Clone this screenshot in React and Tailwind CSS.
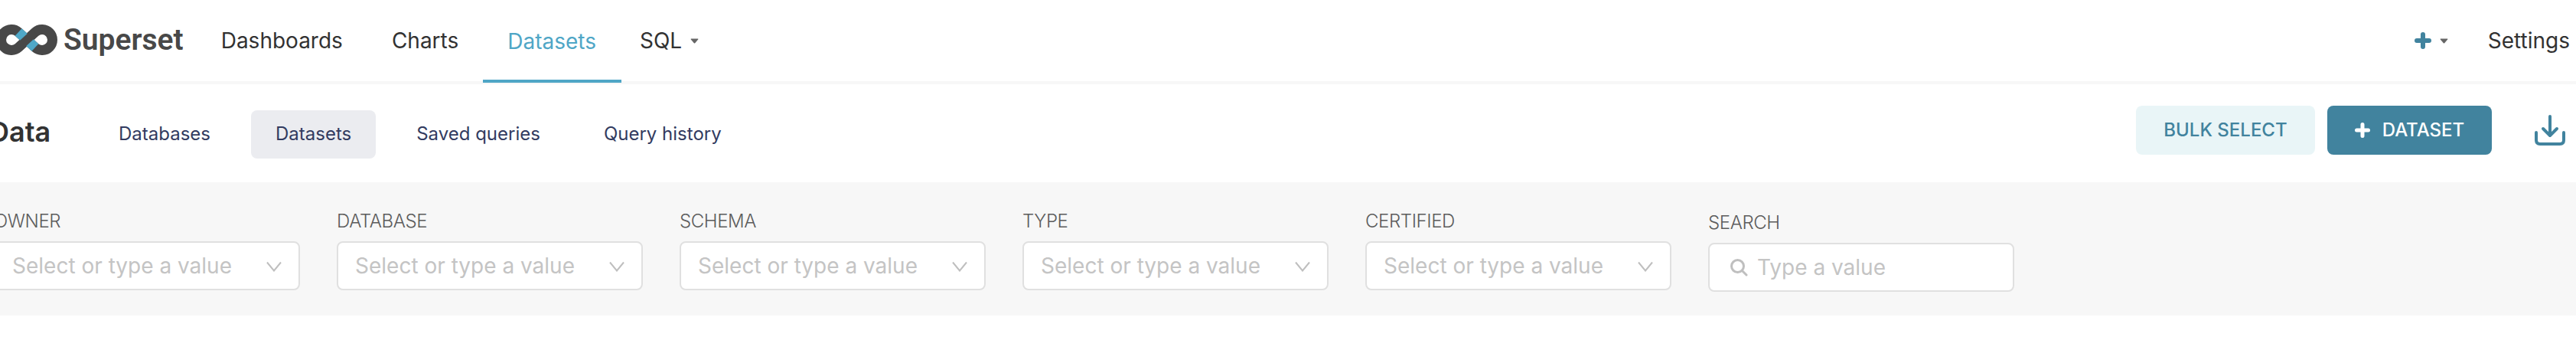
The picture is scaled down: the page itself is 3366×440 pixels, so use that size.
import React from "react";

const font = { fontFamily: '"Inter", "Liberation Sans", sans-serif' };

function Logo() {
  return (
    <svg width="75" height="40" viewBox="0 29 75 40" fill="none" className="shrink-0">
      <path d="M24.1 59 L45.9 39 A13.5 13.5 0 1 1 45.9 59 L24.1 39 A13.5 13.5 0 1 0 24.1 59 Z" stroke="#484848" strokeWidth="13" />
      <path d="M24.1 39 L45.9 59" stroke="#4fa8c8" strokeWidth="13" />
      <path d="M24.1 59 L45.9 39" stroke="#484848" strokeWidth="11" />
    </svg>
  );
}

function Caret({ className }) {
  return (
    <svg width="11" height="7" viewBox="0 0 11 7" className={className}>
      <path d="M1.2 0.5 H9.8 Q10.8 0.5 10.2 1.5 L6.2 6.2 Q5.5 6.9 4.8 6.2 L0.8 1.5 Q0.2 0.5 1.2 0.5 Z" fill="#666666" />
    </svg>
  );
}

function Chevron() {
  return (
    <svg width="20" height="14" viewBox="0 0 20 14" fill="none" className="shrink-0">
      <path d="M1 1.5 L10 12.5 L19 1.5" stroke="#bfbfbf" strokeWidth="2" />
    </svg>
  );
}

function SelectFilter({ label }) {
  return (
    <div className="flex w-[400px] shrink-0 flex-col">
      <div className="h-[26px] text-[24px] font-light leading-[26px] tracking-[-0.4px] text-[#5c5c5c]">{label}</div>
      <div className="mt-[13px] flex h-[64px] items-center justify-between rounded-[8px] border-2 border-[#e0e0e0] bg-white pl-[22px] pr-[22px]">
        <span className="text-[28px] font-normal leading-[36px] text-[#c4c4c4]">Select or type a value</span>
        <span className="mt-[2px] flex"><Chevron /></span>
      </div>
    </div>
  );
}

export default function App() {
  return (
    <div style={font} className="h-[440px] w-[3366px] overflow-hidden bg-white">
      <header className="flex h-[110px] items-start border-b-4 border-[#f7f7f7]">
        <div className="flex h-[106px] items-center pb-[2px]">
          <Logo />
          <span style={{ fontFamily: 'Roboto, "Liberation Sans", sans-serif' }} className="ml-[8px] text-[39px] font-semibold leading-[44px] text-[#484848]">Superset</span>
        </div>
        <nav className="ml-[17px] flex text-[28px] text-[#323232]">
          <a className="flex h-[106px] items-center px-[32px]">Dashboards</a>
          <a className="flex h-[106px] items-center px-[32px]">Charts</a>
          <a className="flex h-[108px] items-center border-b-4 border-[#4fa6c6] pl-[32px] pr-[33px] pt-[4px] text-[#4fa6c6]">Datasets</a>
          <a className="ml-[24px] flex h-[106px] items-center gap-[11px]">SQL<Caret /></a>
        </nav>
        <div className="ml-auto flex h-[106px] items-center">
          <svg width="22" height="22" viewBox="0 0 22 22" className="shrink-0">
            <path d="M11 3 V19 M3 11 H19" stroke="#41839e" strokeWidth="6" strokeLinecap="round" />
          </svg>
          <span className="ml-[11px] flex"><Caret /></span>
          <span className="ml-[52px] text-[28px] text-[#323232]">Settings</span>
          <span className="w-[8px]" />
        </div>
      </header>

      <section className="flex h-[128px] items-center">
        <div className="mb-[4px] ml-[-14px] w-[136px] text-[36px] font-semibold leading-[44px] text-[#323232]">Data</div>
        <div className="mt-[2px] flex items-center text-[24px] text-[#323b60]">
          <a className="flex h-[63px] items-center rounded-[8px] px-[33px]">Databases</a>
          <a className="ml-[20px] flex h-[63px] items-center rounded-[8px] bg-[#ebecf0] px-[32px]">Datasets</a>
          <a className="ml-[20px] flex h-[63px] items-center rounded-[8px] px-[33px]">Saved queries</a>
          <a className="ml-[17px] flex h-[63px] items-center rounded-[8px] px-[33px]">Query history</a>
        </div>
        <div className="mb-[8px] ml-auto flex items-center">
          <button className="flex h-[64px] w-[234px] items-center justify-center rounded-[8px] bg-[#e9f5f7] text-[24px] font-medium text-[#41839e]">BULK SELECT</button>
          <button className="ml-[16px] flex h-[64px] w-[215px] items-center justify-center gap-[16px] rounded-[8px] bg-[#41839e] text-[24px] font-medium text-white">
            <svg width="20" height="20" viewBox="0 0 20 20" className="shrink-0">
              <path d="M10 2.5 V17.5 M2.5 10 H17.5" stroke="#ffffff" strokeWidth="5" strokeLinecap="round" />
            </svg>
            DATASET
          </button>
          <svg width="40" height="40" viewBox="0 0 40 40" fill="none" className="ml-[56px] mr-[14px] shrink-0">
            <path d="M2 23 V33 Q2 38 7 38 H33 Q38 38 38 33 V23" stroke="#41839e" strokeWidth="4" strokeLinecap="round" />
            <path d="M20 2 V26 M11 18 L20 27 L29 18" stroke="#41839e" strokeWidth="4" strokeLinecap="round" strokeLinejoin="round" />
          </svg>
        </div>
      </section>

      <section className="h-[174px] bg-[#f7f7f7] pt-[38px]">
        <div className="ml-[-8px] flex gap-[48px]">
          <SelectFilter label="OWNER" />
          <SelectFilter label="DATABASE" />
          <SelectFilter label="SCHEMA" />
          <SelectFilter label="TYPE" />
          <SelectFilter label="CERTIFIED" />
          <div className="mt-[2px] flex w-[400px] shrink-0 flex-col">
            <div className="h-[26px] text-[24px] font-light leading-[26px] tracking-[-0.4px] text-[#5c5c5c]">SEARCH</div>
            <div className="mt-[13px] flex h-[64px] items-center rounded-[8px] border-2 border-[#e0e0e0] bg-white pl-[26px]">
              <svg width="24" height="24" viewBox="0 0 24 24" fill="none" className="shrink-0">
                <circle cx="10.5" cy="10.5" r="8" stroke="#bfbfbf" strokeWidth="3" />
                <path d="M16.5 16.5 L22 22" stroke="#bfbfbf" strokeWidth="3" strokeLinecap="round" />
              </svg>
              <span className="ml-[12px] text-[28px] font-normal leading-[36px] text-[#c4c4c4]">Type a value</span>
            </div>
          </div>
        </div>
      </section>
    </div>
  );
}
